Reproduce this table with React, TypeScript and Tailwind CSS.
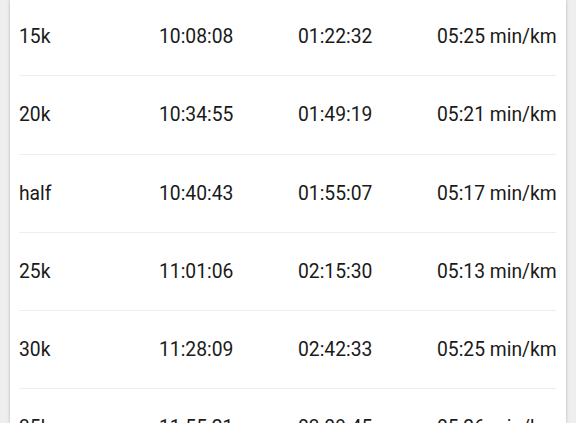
import React from "react";

const rows = [
  ["15k", "10:08:08", "01:22:32", "05:25 min/km"],
  ["20k", "10:34:55", "01:49:19", "05:21 min/km"],
  ["half", "10:40:43", "01:55:07", "05:17 min/km"],
  ["25k", "11:01:06", "02:15:30", "05:13 min/km"],
  ["30k", "11:28:09", "02:42:33", "05:25 min/km"],
  ["35k", "11:55:21", "03:09:45", "05:26 min/km"],
];

export default function App() {
  return (
    <div className="w-[576px] h-[423px] overflow-hidden bg-[#eeeeee] px-[10px]" style={{ fontFamily: "Roboto, sans-serif" }}>
      <div className="h-full bg-white shadow-[0_0_3px_rgba(0,0,0,0.25)] pl-[9px] pr-[10px] overflow-hidden">
        <div className="-mt-[2px]">
          {rows.map((r, i) => (
            <div key={i} className="grid grid-cols-[140px_139px_139px_1fr] items-center pt-[2px] h-[78.25px] border-b border-[#eeeeee] text-[19.3px] text-[#1a1a1a]">
              {r.map((c, j) => (
                <div key={j} className="whitespace-nowrap">{c}</div>
              ))}
            </div>
          ))}
        </div>
      </div>
    </div>
  );
}
